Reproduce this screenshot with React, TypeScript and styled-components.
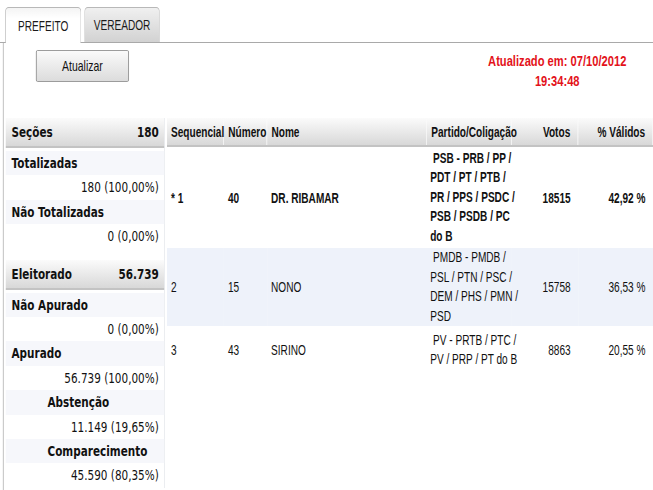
import React from "react";
import styled, { createGlobalStyle } from "styled-components";

// The reference is a horizontally squeezed screenshot: the page is laid out
// at its natural width and compressed on the x axis to 653px.
const SQUEEZE = 0.72;

const GlobalStyle = createGlobalStyle`
  body {
    margin: 0;
    background: #fff;
    font-family: "Liberation Sans", Arial, sans-serif;
    color: #111;
  }
`;

const Viewport = styled.div`
  width: 653px;
  height: 490px;
  overflow: hidden;
`;

const Canvas = styled.div`
  width: 907px;
  height: 490px;
  transform: scaleX(${SQUEEZE});
  transform-origin: 0 0;
`;

const TabBar = styled.div`
  display: flex;
  gap: 4px;
  padding: 5px 0 0 7px;
  height: 37px;
  border-bottom: 1px solid #a9a9a9;
  box-sizing: content-box;
`;

const Tab = styled.div<{ $active?: boolean }>`
  width: ${(p) => (p.$active ? 104 : 103)}px;
  margin-top: 2px;
  border: 1px solid #b8b8b8;
  border-bottom: none;
  border-radius: 5px 5px 0 0;
  background: ${(p) =>
    p.$active ? "linear-gradient(#f4f4f4, #fff 30%)" : "linear-gradient(#f0f0f0, #d2d2d2)"};
  margin-bottom: ${(p) => (p.$active ? "-1px" : "0")};
  display: flex;
  align-items: center;
  justify-content: center;
  font-size: 14px;
  color: #1a1a1a;
`;

const Body = styled.div`
  margin-left: 4px;
  border-left: 1px solid #a9a9a9;
  height: 447px;
`;

const TopRow = styled.div`
  display: flex;
  justify-content: space-between;
  padding: 7px 37px 0 45px;
  height: 68px;
`;

const Button = styled.button`
  width: 129px;
  height: 32px;
  border: 1px solid #8c8c8c;
  border-radius: 2px;
  background: linear-gradient(#fafafa, #dcdcdc);
  font-family: "Liberation Sans", Arial, sans-serif;
  font-size: 14.5px;
  color: #111;
  padding: 0;
`;

const Updated = styled.div`
  color: #e3121a;
  font-weight: bold;
  font-size: 15.5px;
  line-height: 20px;
  text-align: center;
  padding-top: 1px;
`;

const Content = styled.div`
  display: flex;
  align-items: flex-start;
  gap: 3px;
  padding-left: 3px;
`;

const Side = styled.div`
  width: 221px;
  display: flex;
  flex-direction: column;
  gap: 11px;
  border-right: 1px solid #e4e6ea;
  font-family: "DejaVu Sans", Verdana, sans-serif;
  font-size: 14.5px;
`;

const Block = styled.div``;

const BlockHead = styled.div`
  height: 28px;
  display: flex;
  justify-content: space-between;
  align-items: center;
  padding: 0 7px 0 8px;
  font-weight: bold;
  background: linear-gradient(#fbfbfb, #d8d8d8);
  border-bottom: 2px solid #c3c3c3;
`;

const BlockBody = styled.div`
  padding-top: 3px;
`;

const Label = styled.div<{ $indent?: boolean }>`
  height: 24.4px;
  line-height: 24.4px;
  font-weight: bold;
  padding-left: ${(p) => (p.$indent ? 58 : 8)}px;
  background: #f6f7fb;
`;

const Value = styled.div`
  height: 24.4px;
  line-height: 24.4px;
  text-align: right;
  padding-right: 7px;
`;

const Table = styled.table`
  width: 675px;
  border-collapse: collapse;
  table-layout: fixed;
  font-size: 14px;
`;

const Th = styled.th<{ $w: number; $right?: boolean }>`
  box-sizing: border-box;
  width: ${(p) => p.$w}px;
  height: 28px;
  padding: 0 ${(p) => (p.$right ? 10 : 0)}px 0 6px;
  text-align: ${(p) => (p.$right ? "right" : "left")};
  font-weight: bold;
  white-space: nowrap;
  background: linear-gradient(#fbfbfb, #d8d8d8);
  border-bottom: 2px solid #c3c3c3;
  border-right: 1px solid #fafafa;
`;

const Tr = styled.tr<{ $alt?: boolean; $h: number; $win?: boolean }>`
  height: ${(p) => p.$h}px;
  background: ${(p) => (p.$alt ? "#eef2fa" : "#fff")};
  font-weight: ${(p) => (p.$win ? "bold" : "normal")};
`;

const Td = styled.td<{ $right?: boolean }>`
  padding: 0 ${(p) => (p.$right ? 10 : 0)}px 0 6px;
  text-align: ${(p) => (p.$right ? "right" : "left")};
  vertical-align: middle;
  white-space: nowrap;
`;

const Party = styled.td`
  padding: 0 0 0 5px;
  line-height: 19.5px;
  vertical-align: middle;
`;

const PartyLine = styled.div<{ $lead?: boolean }>`
  white-space: nowrap;
  padding-left: ${(p) => (p.$lead ? 4 : 0)}px;
`;

const sections = [
  {
    title: "Seções",
    total: "180",
    items: [
      { label: "Totalizadas", value: "180 (100,00%)" },
      { label: "Não Totalizadas", value: "0 (0,00%)" },
    ],
  },
  {
    title: "Eleitorado",
    total: "56.739",
    items: [
      { label: "Não Apurado", value: "0 (0,00%)" },
      { label: "Apurado", value: "56.739 (100,00%)" },
      { label: "Abstenção", value: "11.149 (19,65%)", indent: true },
      { label: "Comparecimento", value: "45.590 (80,35%)", indent: true },
    ],
  },
];

const candidates = [
  {
    seq: "* 1",
    num: "40",
    name: "DR. RIBAMAR",
    party: ["PSB - PRB / PP /", "PDT / PT / PTB /", "PR / PPS / PSDC /", "PSB / PSDB / PC", "do B"],
    votes: "18515",
    pct: "42,92 %",
    h: 102,
    win: true,
  },
  {
    seq: "2",
    num: "15",
    name: "NONO",
    party: ["PMDB - PMDB /", "PSL / PTN / PSC /", "DEM / PHS / PMN /", "PSD"],
    votes: "15758",
    pct: "36,53 %",
    h: 72,
  },
  {
    seq: "3",
    num: "43",
    name: "SIRINO",
    party: ["PV - PRTB / PTC /", "PV / PRP / PT do B"],
    votes: "8863",
    pct: "20,55 %",
    h: 48,
  },
];

export default function App() {
  return (
    <Viewport>
      <GlobalStyle />
      <Canvas>
        <TabBar>
          <Tab $active>PREFEITO</Tab>
          <Tab>VEREADOR</Tab>
        </TabBar>
        <Body>
          <TopRow>
            <Button>Atualizar</Button>
            <Updated>
              Atualizado em: 07/10/2012
              <br />
              19:34:48
            </Updated>
          </TopRow>
          <Content>
            <Side>
              {sections.map((s) => (
                <Block key={s.title}>
                  <BlockHead>
                    <span>{s.title}</span>
                    <span>{s.total}</span>
                  </BlockHead>
                  <BlockBody>
                    {s.items.map((it) => (
                      <React.Fragment key={it.label}>
                        <Label $indent={it.indent}>{it.label}</Label>
                        <Value>{it.value}</Value>
                      </React.Fragment>
                    ))}
                  </BlockBody>
                </Block>
              ))}
            </Side>
            <Table>
              <thead>
                <tr>
                  <Th $w={79}>Sequencial</Th>
                  <Th $w={60}>Número</Th>
                  <Th $w={222}>Nome</Th>
                  <Th $w={118}>Partido/Coligação</Th>
                  <Th $w={92} $right>Votos</Th>
                  <Th $w={104} $right>% Válidos</Th>
                </tr>
              </thead>
              <tbody>
                {candidates.map((c, i) => (
                  <Tr key={c.num} $h={c.h} $alt={i % 2 === 1} $win={c.win}>
                    <Td>{c.seq}</Td>
                    <Td>{c.num}</Td>
                    <Td>{c.name}</Td>
                    <Party>
                      {c.party.map((l, j) => (
                        <PartyLine key={l} $lead={j === 0}>
                          {l}
                        </PartyLine>
                      ))}
                    </Party>
                    <Td $right>{c.votes}</Td>
                    <Td $right>{c.pct}</Td>
                  </Tr>
                ))}
              </tbody>
            </Table>
          </Content>
        </Body>
      </Canvas>
    </Viewport>
  );
}
